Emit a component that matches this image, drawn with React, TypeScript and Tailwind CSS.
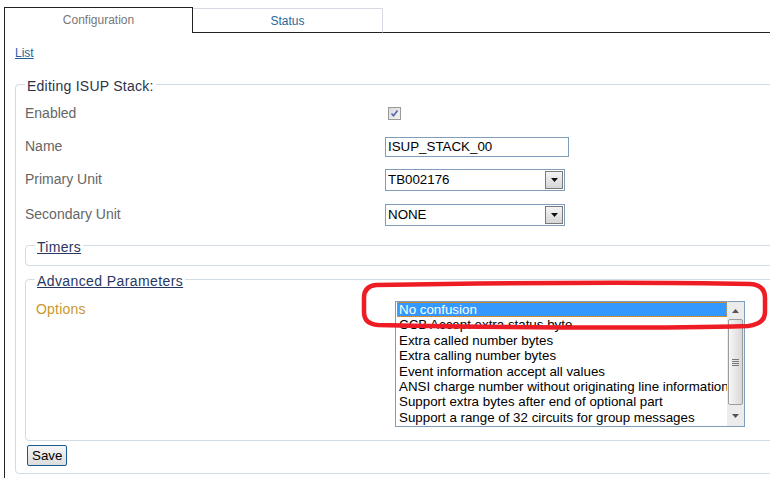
import React from "react";

const options = [
  "No confusion",
  "CCB Accept extra status byte",
  "Extra called number bytes",
  "Extra calling number bytes",
  "Event information accept all values",
  "ANSI charge number without originating line information",
  "Support extra bytes after end of optional part",
  "Support a range of 32 circuits for group messages",
];

function SelectBox({ value }: { value: string }) {
  return (
    <div className="flex items-center w-[180px] h-[22px] border border-[#7f9db9] bg-white pl-[2px] pr-[1px]">
      <span className="flex-1 text-[13.33px] leading-[16px] text-black">{value}</span>
      <span className="flex items-center justify-center w-[18px] h-[18px] border border-[#7a7a7a] bg-gradient-to-b from-[#f4f4f4] to-[#d6d6d6]">
        <svg width="7" height="4" viewBox="0 0 7 4">
          <path d="M0 0h7L3.5 4z" fill="#111" />
        </svg>
      </span>
    </div>
  );
}

function Row({ label, children }: { label: string; children: React.ReactNode }) {
  return (
    <div className="flex items-center h-[33px]">
      <div className="w-[360px] text-[14px] text-[#666]">{label}</div>
      {children}
    </div>
  );
}

export default function App() {
  return (
    <div className="relative w-[770px] h-[478px] overflow-hidden bg-white font-['Liberation_Sans',Arial,sans-serif]">
      {/* tabs */}
      <div className="flex items-end pl-[4px] pt-[7px]">
        <div className="flex items-center justify-center w-[189px] h-[26px] border border-b-0 border-[#222] text-[12px] text-[#777] pb-[1px]">
          Configuration
        </div>
        <div className="flex items-center justify-center w-[190px] h-[25px] border-t border-r border-t-[#d8dae3] border-r-[#d8dae3] border-b border-b-[#222] text-[12px] text-[#2a6aa0]">
          Status
        </div>
        <div className="flex-1 border-b border-[#222]" />
      </div>

      {/* panel */}
      <div className="ml-[4px] h-[445px] border-l border-[#222] pl-[10px] pt-[13px]">
        <a className="block w-fit text-[12px] leading-[14px] text-[#1f5f9a] underline">List</a>

        <fieldset className="mt-[14px] w-[790px] border border-[#d3dbe4] rounded-[4px] pl-[9px] pt-[3px] pb-[6px]">
          <legend className="px-[2px] pt-[4px] text-[14px] leading-[16px] tracking-[0.25px] text-[#2c3446]">Editing ISUP Stack:</legend>

          <Row label="Enabled">
            <span className="ml-[3px] flex items-center justify-center w-[13px] h-[13px] border border-[#9a9a9a] bg-gradient-to-br from-[#dcdcdc] to-[#f2f2f2]">
              <svg width="9" height="9" viewBox="0 0 9 9">
                <path d="M1.5 4.5l2 2.2L7.5 1.5" fill="none" stroke="#5566b0" strokeWidth="1.6" />
              </svg>
            </span>
          </Row>
          <Row label="Name">
            <div className="w-[184px] h-[20px] border border-[#7f9db9] pl-[2px] flex items-center text-[13.33px] text-black">
              ISUP_STACK_00
            </div>
          </Row>
          <Row label="Primary Unit">
            <SelectBox value="TB002176" />
          </Row>
          <div className="flex items-center h-[35px] pt-[2px]">
            <div className="w-[360px] text-[14px] text-[#666]">Secondary Unit</div>
            <SelectBox value="NONE" />
          </div>

          <fieldset className="mt-[4px] border border-[#d3dbe4] rounded-[4px] pl-[9px]">
            <legend className="px-[2px] pt-[4px] text-[14px] leading-[16px] tracking-[0.3px] text-[#283762] underline">Timers</legend>
            <div className="h-[10px]" />
          </fieldset>

          <fieldset className="mt-[3px] border border-[#d3dbe4] rounded-[4px] pl-[9px] pt-[12px] pb-[13px]">
            <legend className="px-[2px] pt-[4px] text-[14px] leading-[16px] tracking-[0.4px] text-[#283762] underline">Advanced Parameters</legend>
            <div className="flex items-start">
              <div className="w-[360px] pl-[1px] text-[14px] leading-[16px] tracking-[0.2px] text-[#c9982c]">Options</div>
              <div className="flex w-[350px] h-[126px] border border-[#7f9db9] bg-white">
                <div className="flex-1 overflow-hidden pl-[1px]">
                  {options.map((o, i) => (
                    <div
                      key={o}
                      className={`h-[15.4px] pl-[2px] whitespace-nowrap text-[13.33px] leading-[15.4px] ${
                        i === 0
                          ? "bg-[#3399ff] text-white outline-1 outline-dotted outline-[#d9963f] -outline-offset-1"
                          : "text-black"
                      }`}
                    >
                      {o}
                    </div>
                  ))}
                </div>
                <div className="flex flex-col w-[17px] bg-[#ececec]">
                  <div className="flex items-center justify-center h-[17px]">
                    <svg width="7" height="4" viewBox="0 0 7 4">
                      <path d="M0 4h7L3.5 0z" fill="#555" />
                    </svg>
                  </div>
                  <div className="mx-[1px] h-[86px] rounded-[2px] border border-[#9c9c9c] bg-gradient-to-r from-[#f6f6f6] to-[#d8d8d8] flex items-center justify-center">
                    <div className="flex flex-col gap-[1px]">
                      <div className="w-[7px] h-[1px] bg-[#777]" />
                      <div className="w-[7px] h-[1px] bg-[#777]" />
                      <div className="w-[7px] h-[1px] bg-[#777]" />
                      <div className="w-[7px] h-[1px] bg-[#777]" />
                    </div>
                  </div>
                  <div className="flex-1 flex items-center justify-center">
                    <svg width="7" height="4" viewBox="0 0 7 4">
                      <path d="M0 0h7L3.5 4z" fill="#555" />
                    </svg>
                  </div>
                </div>
              </div>
            </div>
          </fieldset>

          <button className="mt-[4px] ml-[2px] h-[21px] px-[4px] border border-[#1a5a8e] rounded-[2px] bg-gradient-to-b from-[#f6f6f6] to-[#dcdcdc] text-[13.33px] leading-[15px] text-black">
            Save
          </button>
        </fieldset>
      </div>

      {/* red annotation */}
      <svg className="absolute left-0 top-0 pointer-events-none" width="770" height="478">
        <path
          d="M376 285 C 500 283, 650 282, 750 284 Q 765 285 765 298 L 765 312 Q 765 324 748 326 C 640 329, 480 327, 378 325 Q 364 324 364 312 L 364 298 Q 364 286 376 285 Z"
          fill="none"
          stroke="#ee1c24"
          strokeWidth="4.5"
        />
      </svg>
    </div>
  );
}
